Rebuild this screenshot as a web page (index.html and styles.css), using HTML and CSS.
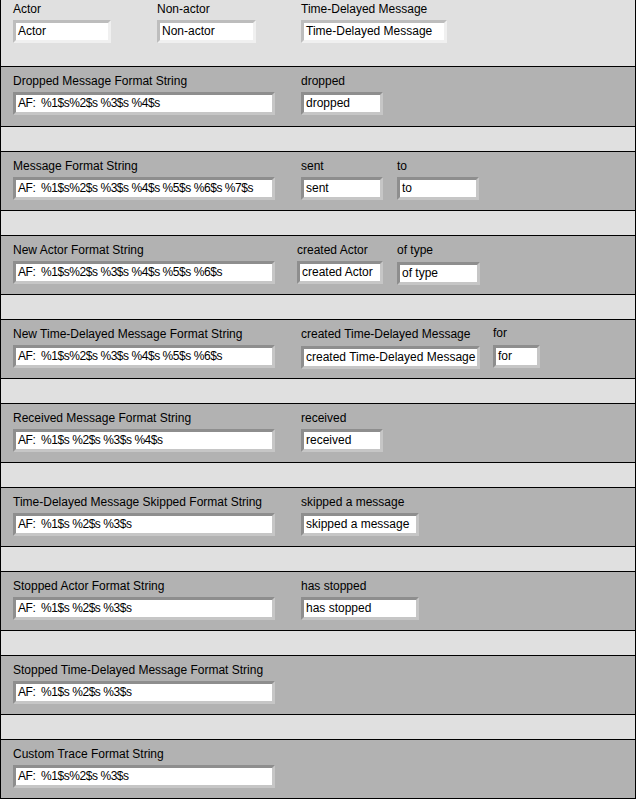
FILE: index.html
```html
<!DOCTYPE html>
<html>
<head>
<meta charset="utf-8">
<link rel="stylesheet" href="styles.css">
</head>
<body>
<div class="panel">
  <div class="sec top">
    <div class="ctl w97 mr47"><div class="lbl">Actor</div><div class="fld">Actor</div></div>
    <div class="ctl w98 mr46"><div class="lbl">Non-actor</div><div class="fld">Non-actor</div></div>
    <div class="ctl w145"><div class="lbl">Time-Delayed Message</div><div class="fld">Time-Delayed Message</div></div>
  </div>
  <div class="sec dark first">
    <div class="ctl wl"><div class="lbl">Dropped Message Format String</div><div class="fld af">AF:  %1$s%2$s %3$s %4$s</div></div>
    <div class="ctl w81"><div class="lbl">dropped</div><div class="fld">dropped</div></div>
  </div>
  <div class="band"></div>
  <div class="sec dark">
    <div class="ctl wl"><div class="lbl">Message Format String</div><div class="fld af">AF:  %1$s%2$s %3$s %4$s %5$s %6$s %7$s</div></div>
    <div class="ctl w81 mr15"><div class="lbl">sent</div><div class="fld">sent</div></div>
    <div class="ctl w81"><div class="lbl">to</div><div class="fld">to</div></div>
  </div>
  <div class="band"></div>
  <div class="sec dark">
    <div class="ctl wl"><div class="lbl">New Actor Format String</div><div class="fld af">AF:  %1$s%2$s %3$s %4$s %5$s %6$s</div></div>
    <div class="ctl w85 mr15"><div class="lbl">created Actor</div><div class="fld">created Actor</div></div>
    <div class="ctl w82"><div class="lbl">of type</div><div class="fld low">of type</div></div>
  </div>
  <div class="band"></div>
  <div class="sec dark">
    <div class="ctl wl"><div class="lbl">New Time-Delayed Message Format String</div><div class="fld af">AF:  %1$s%2$s %3$s %4$s %5$s %6$s</div></div>
    <div class="ctl w178 mr14"><div class="lbl">created Time-Delayed Message</div><div class="fld low">created Time-Delayed Message</div></div>
    <div class="ctl w46"><div class="lbl up">for</div><div class="fld">for</div></div>
  </div>
  <div class="band"></div>
  <div class="sec dark">
    <div class="ctl wl"><div class="lbl">Received Message Format String</div><div class="fld af">AF:  %1$s %2$s %3$s %4$s</div></div>
    <div class="ctl w81"><div class="lbl">received</div><div class="fld">received</div></div>
  </div>
  <div class="band"></div>
  <div class="sec dark">
    <div class="ctl wl"><div class="lbl">Time-Delayed Message Skipped Format String</div><div class="fld af">AF:  %1$s %2$s %3$s</div></div>
    <div class="ctl w117"><div class="lbl">skipped a message</div><div class="fld">skipped a message</div></div>
  </div>
  <div class="band"></div>
  <div class="sec dark">
    <div class="ctl wl"><div class="lbl">Stopped Actor Format String</div><div class="fld af">AF:  %1$s %2$s %3$s</div></div>
    <div class="ctl w117"><div class="lbl">has stopped</div><div class="fld">has stopped</div></div>
  </div>
  <div class="band"></div>
  <div class="sec dark">
    <div class="ctl wl"><div class="lbl">Stopped Time-Delayed Message Format String</div><div class="fld af">AF:  %1$s %2$s %3$s</div></div>
  </div>
  <div class="band"></div>
  <div class="sec dark last">
    <div class="ctl wl"><div class="lbl">Custom Trace Format String</div><div class="fld af">AF:  %1$s%2$s %3$s</div></div>
  </div>
</div>
</body>
</html>
```
FILE: styles.css
```css
html, body {
  margin: 0;
  padding: 0;
  background: #e0e0e0;
}
body {
  font-family: "Liberation Sans", Arial, sans-serif;
  font-size: 12px;
  color: #000;
}
.panel {
  width: 634px;
  height: 798px;
  border-left: 1px solid #000;
  border-right: 1px solid #000;
  border-bottom: 1px solid #000;
  display: flex;
  flex-direction: column;
}
.sec {
  display: flex;
  align-items: flex-start;
  padding-left: 12px;
  box-sizing: border-box;
}
.top {
  height: 67px;
  background: #e0e0e0;
  padding-top: 1px;
  border-bottom: 1px solid #000;
}
.dark {
  height: 58px;
  background: #b2b2b2;
  padding-top: 6px;
}
.dark.first {
  height: 59px;
}
.dark.last {
  flex: 1;
}
.band {
  height: 26px;
  box-sizing: border-box;
  background: #e0e0e0;
  border-top: 1px solid #000;
  border-bottom: 1px solid #000;
}
.ctl {
  display: flex;
  flex-direction: column;
}
.lbl {
  height: 16px;
  line-height: 16px;
  white-space: nowrap;
  margin-bottom: 3px;
}
.lbl.up {
  margin-top: -1px;
  margin-bottom: 4px;
}
.fld {
  box-sizing: border-box;
  height: 23px;
  line-height: 17px;
  padding-left: 2px;
  background: #fff;
  white-space: pre;
  overflow: hidden;
  border: 3px solid;
  border-color: #8e8e8e #c6c6c6 #c6c6c6 #8e8e8e;
}
.af {
  letter-spacing: -0.45px;
}
.top .fld {
  border-color: #bdbdbd #f0f0f0 #f0f0f0 #bdbdbd;
}
.low { margin-top: 1px; }
.wl { width: 262px; margin-right: 26px; }
.w97 { width: 98px; }
.w98 { width: 99px; }
.w145 { width: 146px; }
.w81 { width: 82px; }
.w85 { width: 86px; margin-left: -4px; }
.w82 { width: 83px; }
.w178 { width: 179px; }
.w46 { width: 47px; }
.w117 { width: 118px; }
.mr47 { margin-right: 46px; }
.mr46 { margin-right: 45px; }
.mr15 { margin-right: 14px; }
.mr14 { margin-right: 13px; }
```
